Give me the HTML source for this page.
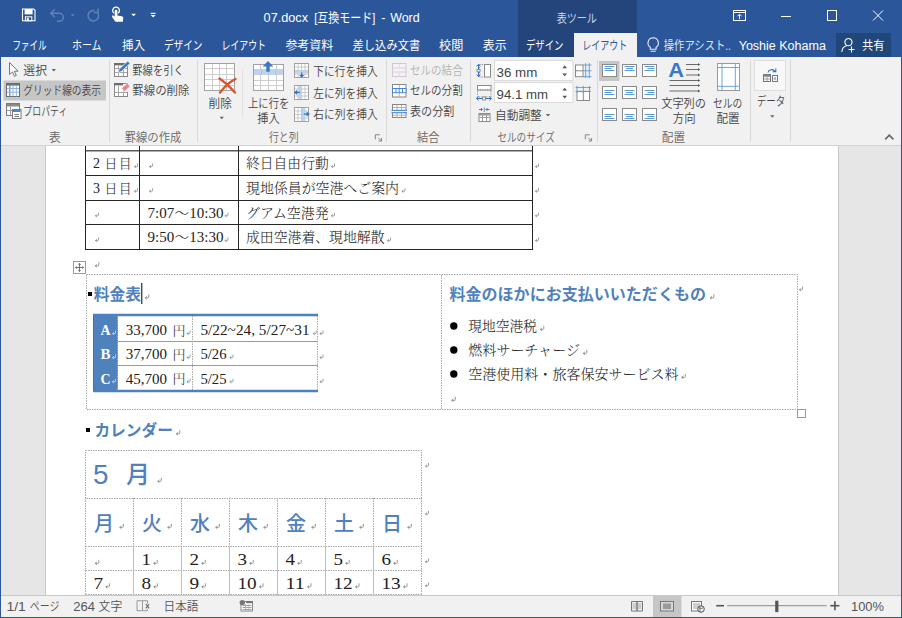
<!DOCTYPE html>
<html lang="ja"><head><meta charset="utf-8"><title>07.docx [互換モード] - Word</title>
<style>
html,body{margin:0;padding:0;}
body{width:902px;height:618px;overflow:hidden;background:#e6e6e6;font-family:"Liberation Sans","Noto Sans CJK JP",sans-serif;}
#app{position:relative;width:902px;height:618px;overflow:hidden;background:#e6e6e6;}
#titlebar{position:absolute;left:0;top:0;width:902px;height:57px;background:#2b579a;}
#ctx{position:absolute;left:518px;top:0;width:119px;height:57px;background:#23457c;}
#acttab{position:absolute;left:574px;top:33px;width:63px;height:24px;background:#f1f1f1;}
#share{position:absolute;left:836px;top:33px;width:55px;height:24px;background:#1f4779;}
#ribbon{position:absolute;left:1px;top:57px;width:900px;height:88px;background:#f1f1f1;border-bottom:1px solid #d2d2d2;}
#doc{position:absolute;left:1px;top:146px;width:900px;height:449px;background:#e6e6e6;}
#page{position:absolute;left:44px;top:0;width:792px;height:449px;background:#fff;border-left:1px solid #c8c8c8;border-right:1px solid #c8c8c8;}
#status{position:absolute;left:1px;top:595px;width:900px;height:22px;background:#f1f1f1;border-top:1px solid #c8c8c8;box-sizing:border-box;}
#frameL,#frameR{position:absolute;top:0;width:1px;height:618px;background:#2b579a;}
#frameL{left:0}#frameR{left:901px}
#frameB{position:absolute;left:0;top:617px;width:902px;height:1px;background:#2b579a;}
#ov{position:absolute;left:0;top:0;}
text{white-space:pre;}
.u{font-family:"Liberation Sans","Noto Sans CJK JP",sans-serif;font-weight:350;}
.s{font-family:"Liberation Serif","Noto Serif CJK JP","Noto Serif CJK SC",serif;font-weight:300;}
.g{font-family:"Liberation Sans","Noto Sans CJK JP",sans-serif;}
</style></head><body>
<div id="app">
<div id="titlebar"><div id="ctx"></div><div id="acttab"></div><div id="share"></div></div>
<div id="ribbon"></div>
<div id="doc"><div id="page"></div></div>
<div id="status"></div>
<div id="frameL"></div><div id="frameR"></div><div id="frameB"></div>
<svg id="ov" width="902" height="618" viewBox="0 0 902 618">
<path d="M22.5 9h11.2l1.3 1.3v10.4h-12.5z" fill="none" stroke="#ffffff" stroke-width="1.1" />
<rect x="24.6" y="9" width="8" height="5.4" fill="#ffffff" />
<rect x="25.4" y="16.8" width="6.4" height="4" fill="none" stroke="#ffffff" stroke-width="1" />
<rect x="26.8" y="17.8" width="2" height="2.6" fill="#ffffff" />
<path d="M51 13.3h8.2a4 4 0 0 1 0 8h-2.2 M54.8 9.3l-4 4l4 4" fill="none" stroke="#6482b8" stroke-width="1.5" />
<path d="M70.6 14.2h4.4l-2.2 2.3z" fill="#6482b8" />
<path d="M94.6 10.6a5.3 5.3 0 1 0 3.4 2.6 M98 8.4v4.2h-4.2" fill="none" stroke="#6482b8" stroke-width="1.5" />
<path d="M115.6 21.8c-2.2-2.6-3.2-4.2-3.8-5.8c.9-.9 2.2-.4 2.9.7V11.2a1.35 1.35 0 0 1 2.7 0v4.2l4.3.8c1.1.2 1.8 1.1 1.6 2.2l-.5 3.4z" fill="#ffffff" />
<path d="M113.9 13.2a3.4 3.4 0 1 1 4.3 0" fill="none" stroke="#ffffff" stroke-width="1.3" />
<path d="M131.2 13.8h4.8l-2.4 2.5z" fill="#ffffff" />
<rect x="150.6" y="12.8" width="5" height="1.1" fill="#ffffff" />
<path d="M150.6 15h5l-2.5 2.5z" fill="#ffffff" />
<text class="u" y="22.2" font-size="13" fill="#ffffff" style="font-weight:400"><tspan x="263.6" textLength="47.9" lengthAdjust="spacingAndGlyphs">07.docx </tspan><tspan x="314.2" textLength="64.3" lengthAdjust="spacingAndGlyphs">[互換モード] </tspan><tspan x="381.2" textLength="7.8" lengthAdjust="spacingAndGlyphs">- </tspan><tspan x="390.2" textLength="29.5" lengthAdjust="spacingAndGlyphs">Word</tspan></text>
<text class="u" x="556.8" y="23.1" font-size="12" fill="#c9d5ea" textLength="40.1" lengthAdjust="spacingAndGlyphs" style="font-weight:400">表ツール</text>
<rect x="733.5" y="10.5" width="12" height="10" fill="none" stroke="#ffffff" stroke-width="1" />
<line x1="733.5" y1="12.5" x2="745.5" y2="12.5" stroke="#ffffff" stroke-width="1" />
<path d="M739.5 19v-4.5 M737.5 16.2l2-2l2 2" fill="none" stroke="#ffffff" stroke-width="1" />
<line x1="781" y1="16.5" x2="791" y2="16.5" stroke="#ffffff" stroke-width="1" />
<rect x="827.5" y="10.5" width="9" height="10" fill="none" stroke="#ffffff" stroke-width="1" />
<path d="M873 10.5l10 10 M883 10.5l-10 10" fill="none" stroke="#ffffff" stroke-width="1" />
<text class="u" x="12.5" y="49.5" font-size="12" fill="#ffffff" textLength="33.9" lengthAdjust="spacingAndGlyphs" style="font-weight:400">ファイル</text>
<text class="u" x="72.0" y="49.5" font-size="12" fill="#ffffff" textLength="29.5" lengthAdjust="spacingAndGlyphs" style="font-weight:400">ホーム</text>
<text class="u" x="122.0" y="49.5" font-size="12" fill="#ffffff" textLength="23.0" lengthAdjust="spacingAndGlyphs" style="font-weight:400">挿入</text>
<text class="u" x="164.0" y="49.5" font-size="12" fill="#ffffff" textLength="38.5" lengthAdjust="spacingAndGlyphs" style="font-weight:400">デザイン</text>
<text class="u" x="221.5" y="49.5" font-size="12" fill="#ffffff" textLength="44.5" lengthAdjust="spacingAndGlyphs" style="font-weight:400">レイアウト</text>
<text class="u" x="285.4" y="49.5" font-size="12" fill="#ffffff" textLength="47.9" lengthAdjust="spacingAndGlyphs" style="font-weight:400">参考資料</text>
<text class="u" x="352.6" y="49.5" font-size="12" fill="#ffffff" textLength="67.6" lengthAdjust="spacingAndGlyphs" style="font-weight:400">差し込み文書</text>
<text class="u" x="439.0" y="49.5" font-size="12" fill="#ffffff" textLength="24.3" lengthAdjust="spacingAndGlyphs" style="font-weight:400">校閲</text>
<text class="u" x="482.8" y="49.5" font-size="12" fill="#ffffff" textLength="23.8" lengthAdjust="spacingAndGlyphs" style="font-weight:400">表示</text>
<text class="u" x="526.0" y="49.5" font-size="12" fill="#ffffff" textLength="37.5" lengthAdjust="spacingAndGlyphs" style="font-weight:400">デザイン</text>
<text class="u" x="582.3" y="49.5" font-size="12" fill="#2b579a" textLength="45.1" lengthAdjust="spacingAndGlyphs" style="font-weight:400">レイアウト</text>
<path d="M653.2 37.8a5.2 5.2 0 0 0 -2.9 9.5v2h5.8v-2a5.2 5.2 0 0 0 -2.9 -9.5z M650.6 51.2h5.2" fill="none" stroke="#e8eefa" stroke-width="1.1" />
<text class="u" x="663.8" y="49.5" font-size="12" fill="#dfe7f5" textLength="67.2" lengthAdjust="spacingAndGlyphs" style="font-weight:400">操作アシスト..</text>
<text class="u" x="738.7" y="49.7" font-size="12.5" fill="#ffffff" textLength="87.2" lengthAdjust="spacingAndGlyphs" style="font-weight:400">Yoshie Kohama</text>
<path d="M848.5 38.5a3.6 3.6 0 1 1 -0.1 0z M841.8 52c.3-4 2.6-6 5-6.3" fill="none" stroke="#ffffff" stroke-width="1.1" />
<path d="M851.5 46.5v6 M848.5 49.5h6" fill="none" stroke="#ffffff" stroke-width="1.1" />
<text class="u" x="862.0" y="49.5" font-size="12" fill="#ffffff" textLength="22.5" lengthAdjust="spacingAndGlyphs" style="font-weight:400">共有</text>
<line x1="109.5" y1="60" x2="109.5" y2="142" stroke="#d8d8d8" stroke-width="1" />
<line x1="197.5" y1="60" x2="197.5" y2="142" stroke="#d8d8d8" stroke-width="1" />
<line x1="386.5" y1="60" x2="386.5" y2="142" stroke="#d8d8d8" stroke-width="1" />
<line x1="470.5" y1="60" x2="470.5" y2="142" stroke="#d8d8d8" stroke-width="1" />
<line x1="597.5" y1="60" x2="597.5" y2="142" stroke="#d8d8d8" stroke-width="1" />
<line x1="750.5" y1="60" x2="750.5" y2="142" stroke="#d8d8d8" stroke-width="1" />
<line x1="790.5" y1="60" x2="790.5" y2="142" stroke="#d8d8d8" stroke-width="1" />
<line x1="242.5" y1="69" x2="242.5" y2="117" stroke="#e2e2e2" stroke-width="1" />
<text class="u" x="48.7" y="141.6" font-size="12" fill="#666666" textLength="12.0" lengthAdjust="spacingAndGlyphs">表</text>
<text class="u" x="124.7" y="141.6" font-size="12" fill="#666666" textLength="56.6" lengthAdjust="spacingAndGlyphs">罫線の作成</text>
<text class="u" x="268.9" y="141.6" font-size="12" fill="#666666" textLength="29.7" lengthAdjust="spacingAndGlyphs">行と列</text>
<text class="u" x="417.0" y="141.6" font-size="12" fill="#666666" textLength="22.5" lengthAdjust="spacingAndGlyphs">結合</text>
<text class="u" x="497.4" y="141.6" font-size="12" fill="#666666" textLength="57.4" lengthAdjust="spacingAndGlyphs">セルのサイズ</text>
<text class="u" x="661.8" y="141.6" font-size="12" fill="#666666" textLength="23.2" lengthAdjust="spacingAndGlyphs">配置</text>
<path d="M375.3 139.3v-4.5h4.5 M378.3 137.8l3 3 M381.6 138.0v3h-3" fill="none" stroke="#777" stroke-width="0.9" />
<path d="M585.3 139.3v-4.5h4.5 M588.3 137.8l3 3 M591.5999999999999 138.0v3h-3" fill="none" stroke="#777" stroke-width="0.9" />
<path d="M885.2 139.3l4.1-4.1l4.1 4.1" fill="none" stroke="#666" stroke-width="1.7" />
<path d="M9.5 62.5v12l3-2.6l2 4.4l1.8-.8l-2-4.3h3.8z" fill="#fff" stroke="#666" stroke-width="0.9" />
<text class="u" x="23.3" y="74.6" font-size="12" fill="#444444" textLength="23.7" lengthAdjust="spacingAndGlyphs">選択</text>
<path d="M51.6 69h4.4l-2.2 2.4z" fill="#666" />
<rect x="3.5" y="80.5" width="102.5" height="20" fill="#c6c6c6" />
<rect x="6.5" y="83.5" width="13" height="13" fill="#fff" stroke="#6b6b6b" stroke-width="1" />
<rect x="6" y="83" width="14" height="2.6" fill="#6e6e6e" />
<line x1="9.8" y1="85.6" x2="9.8" y2="96.5" stroke="#4a86d0" stroke-width="1.2" />
<line x1="13" y1="85.6" x2="13" y2="96.5" stroke="#8db2e3" stroke-width="1" />
<line x1="16.3" y1="85.6" x2="16.3" y2="96.5" stroke="#8db2e3" stroke-width="1" />
<line x1="7" y1="88.5" x2="19" y2="88.5" stroke="#8db2e3" stroke-width="1" />
<line x1="7" y1="92.2" x2="19" y2="92.2" stroke="#8db2e3" stroke-width="1" />
<text class="u" x="23.3" y="94.7" font-size="12" fill="#444444" textLength="77.7" lengthAdjust="spacingAndGlyphs">グリッド線の表示</text>
<rect x="6.5" y="103.5" width="13" height="12" fill="#fff" stroke="#7a7a7a" stroke-width="1" />
<rect x="7" y="104" width="12" height="2.5" fill="#8a8a8a" />
<line x1="10.5" y1="106.5" x2="10.5" y2="115.5" stroke="#9a9a9a" stroke-width="1" />
<line x1="7" y1="110.5" x2="12" y2="110.5" stroke="#9a9a9a" stroke-width="1" />
<rect x="12.5" y="109.5" width="8.5" height="9" fill="#fff" stroke="#7a7a7a" stroke-width="1" />
<rect x="13" y="110" width="7.5" height="2" fill="#4a86d0" />
<line x1="14.5" y1="114.5" x2="19" y2="114.5" stroke="#777" stroke-width="1" />
<line x1="14.5" y1="116.5" x2="19" y2="116.5" stroke="#777" stroke-width="1" />
<text class="u" x="23.3" y="115.8" font-size="12" fill="#444444" textLength="44.1" lengthAdjust="spacingAndGlyphs">プロパティ</text>
<rect x="114.5" y="63.5" width="13" height="13" fill="#fff" stroke="#888" stroke-width="1" />
<rect x="114" y="63" width="10.5" height="2.4" fill="#6e6e6e" />
<line x1="118.5" y1="66" x2="118.5" y2="76" stroke="#a5a5a5" stroke-width="1" />
<line x1="123.5" y1="66" x2="123.5" y2="76" stroke="#a5a5a5" stroke-width="1" />
<line x1="115" y1="68.5" x2="127" y2="68.5" stroke="#a5a5a5" stroke-width="1" />
<line x1="115" y1="72.5" x2="127" y2="72.5" stroke="#a5a5a5" stroke-width="1" />
<path d="M118.3 72.4l.9-3.3l8.6-8l2.2 2.3l-8.6 8z" fill="#3b78c7" stroke="#f1f1f1" stroke-width="0.7" />
<text class="u" x="132.2" y="74.6" font-size="12" fill="#444444" textLength="51.8" lengthAdjust="spacingAndGlyphs">罫線を引く</text>
<rect x="114.5" y="83.5" width="13" height="13" fill="#fff" stroke="#888" stroke-width="1" />
<rect x="114" y="83" width="9" height="2.4" fill="#6e6e6e" />
<line x1="118.5" y1="86" x2="118.5" y2="96" stroke="#a5a5a5" stroke-width="1" />
<line x1="123.5" y1="86" x2="123.5" y2="96" stroke="#a5a5a5" stroke-width="1" />
<line x1="115" y1="92.5" x2="127" y2="92.5" stroke="#a5a5a5" stroke-width="1" />
<rect x="123.5" y="87.5" width="5.5" height="4.5" fill="#fafafa" />
<path d="M121.6 88.3l5.6-5l2.9 3.2l-5.6 5z" fill="#e98592" stroke="#f1f1f1" stroke-width="0.7" stroke-linejoin="round"/>
<text class="u" x="132.2" y="94.7" font-size="12" fill="#444444" textLength="57.4" lengthAdjust="spacingAndGlyphs">罫線の削除</text>
<rect x="204.5" y="63.5" width="30" height="27" fill="#fff" stroke="#a2a2a2" stroke-width="1" />
<line x1="212.5" y1="64" x2="212.5" y2="90" stroke="#cdcdcd" stroke-width="1" />
<line x1="219.5" y1="64" x2="219.5" y2="90" stroke="#cdcdcd" stroke-width="1" />
<line x1="226.5" y1="64" x2="226.5" y2="90" stroke="#cdcdcd" stroke-width="1" />
<line x1="205" y1="68.5" x2="234" y2="68.5" stroke="#cdcdcd" stroke-width="1" />
<line x1="205" y1="74.5" x2="234" y2="74.5" stroke="#cdcdcd" stroke-width="1" />
<line x1="205" y1="79.5" x2="234" y2="79.5" stroke="#cdcdcd" stroke-width="1" />
<line x1="205" y1="85.5" x2="234" y2="85.5" stroke="#cdcdcd" stroke-width="1" />
<path d="M219.5 78.5c5 3.5 10 8 15.5 14 M235.5 79c-6 3-11 7.5-15.5 13.5" fill="none" stroke="#d9532c" stroke-width="2.4" stroke-linecap="round"/>
<text class="u" x="208.5" y="107.5" font-size="12" fill="#444444" textLength="23.3" lengthAdjust="spacingAndGlyphs">削除</text>
<path d="M219.6 116.8h4.4l-2.2 2.4z" fill="#666" />
<rect x="253.5" y="64.5" width="30" height="26" fill="#fff" stroke="#a2a2a2" stroke-width="1" />
<line x1="260.5" y1="65" x2="260.5" y2="90" stroke="#cdcdcd" stroke-width="1" />
<line x1="268.5" y1="65" x2="268.5" y2="90" stroke="#cdcdcd" stroke-width="1" />
<line x1="276.5" y1="65" x2="276.5" y2="90" stroke="#cdcdcd" stroke-width="1" />
<line x1="254" y1="69.5" x2="283" y2="69.5" stroke="#cdcdcd" stroke-width="1" />
<line x1="254" y1="74.5" x2="283" y2="74.5" stroke="#cdcdcd" stroke-width="1" />
<line x1="254" y1="80.5" x2="283" y2="80.5" stroke="#cdcdcd" stroke-width="1" />
<line x1="254" y1="85.5" x2="283" y2="85.5" stroke="#cdcdcd" stroke-width="1" />
<rect x="254" y="69.5" width="29" height="5" fill="#bdd3ee" />
<line x1="261.5" y1="69.5" x2="261.5" y2="74.5" stroke="#a9c3e6" stroke-width="1" />
<line x1="268.5" y1="69.5" x2="268.5" y2="74.5" stroke="#a9c3e6" stroke-width="1" />
<line x1="275.5" y1="69.5" x2="275.5" y2="74.5" stroke="#a9c3e6" stroke-width="1" />
<path d="M268 61l5.4 5.6h-3.7v5.2h-3.4v-5.2h-3.7z" fill="#3b78c7" />
<text class="u" x="248.0" y="107.5" font-size="12" fill="#444444" textLength="41.4" lengthAdjust="spacingAndGlyphs">上に行を</text>
<text class="u" x="257.3" y="122.5" font-size="12" fill="#444444" textLength="22.4" lengthAdjust="spacingAndGlyphs">挿入</text>
<rect x="294.5" y="63.5" width="14" height="14" fill="#fff" stroke="#a2a2a2" stroke-width="1" />
<line x1="298.0" y1="64" x2="298.0" y2="77" stroke="#b4b4b4" stroke-width="0.7" />
<line x1="295" y1="67.0" x2="308" y2="67.0" stroke="#b4b4b4" stroke-width="0.7" />
<line x1="301.5" y1="64" x2="301.5" y2="77" stroke="#b4b4b4" stroke-width="0.7" />
<line x1="295" y1="70.5" x2="308" y2="70.5" stroke="#b4b4b4" stroke-width="0.7" />
<line x1="305.0" y1="64" x2="305.0" y2="77" stroke="#b4b4b4" stroke-width="0.7" />
<line x1="295" y1="74.0" x2="308" y2="74.0" stroke="#b4b4b4" stroke-width="0.7" />
<rect x="295" y="70.5" width="13" height="3" fill="#bdd3ee" />
<path d="M301.7 72.5v3" fill="none" stroke="#3572c0" stroke-width="1.3" />
<path d="M299 74.8l2.7 3.2l2.7-3.2z" fill="#3572c0" />
<rect x="294.5" y="85.5" width="14" height="14" fill="#fff" stroke="#a2a2a2" stroke-width="1" />
<line x1="298.0" y1="86" x2="298.0" y2="99" stroke="#b4b4b4" stroke-width="0.7" />
<line x1="295" y1="89.0" x2="308" y2="89.0" stroke="#b4b4b4" stroke-width="0.7" />
<line x1="301.5" y1="86" x2="301.5" y2="99" stroke="#b4b4b4" stroke-width="0.7" />
<line x1="295" y1="92.5" x2="308" y2="92.5" stroke="#b4b4b4" stroke-width="0.7" />
<line x1="305.0" y1="86" x2="305.0" y2="99" stroke="#b4b4b4" stroke-width="0.7" />
<line x1="295" y1="96.0" x2="308" y2="96.0" stroke="#b4b4b4" stroke-width="0.7" />
<rect x="298.5" y="86" width="3" height="13" fill="#bdd3ee" />
<path d="M300 92.4h-3" fill="none" stroke="#3572c0" stroke-width="1.3" />
<path d="M297.2 89.7l-3.3 2.7l3.3 2.7z" fill="#3572c0" />
<rect x="294.5" y="107.5" width="14" height="14" fill="#fff" stroke="#a2a2a2" stroke-width="1" />
<line x1="298.0" y1="108" x2="298.0" y2="121" stroke="#b4b4b4" stroke-width="0.7" />
<line x1="295" y1="111.0" x2="308" y2="111.0" stroke="#b4b4b4" stroke-width="0.7" />
<line x1="301.5" y1="108" x2="301.5" y2="121" stroke="#b4b4b4" stroke-width="0.7" />
<line x1="295" y1="114.5" x2="308" y2="114.5" stroke="#b4b4b4" stroke-width="0.7" />
<line x1="305.0" y1="108" x2="305.0" y2="121" stroke="#b4b4b4" stroke-width="0.7" />
<line x1="295" y1="118.0" x2="308" y2="118.0" stroke="#b4b4b4" stroke-width="0.7" />
<rect x="302" y="108" width="3" height="13" fill="#bdd3ee" />
<path d="M303.8 114.1h3" fill="none" stroke="#3572c0" stroke-width="1.3" />
<path d="M306.5 111.4l3.3 2.7l-3.3 2.7z" fill="#3572c0" />
<text class="u" x="313.3" y="75.6" font-size="12" fill="#444444" textLength="64.5" lengthAdjust="spacingAndGlyphs">下に行を挿入</text>
<text class="u" x="313.3" y="97.9" font-size="12" fill="#444444" textLength="64.5" lengthAdjust="spacingAndGlyphs">左に列を挿入</text>
<text class="u" x="313.3" y="119.2" font-size="12" fill="#444444" textLength="64.5" lengthAdjust="spacingAndGlyphs">右に列を挿入</text>
<rect x="392.5" y="63.5" width="13.5" height="13" fill="#f6f1f6" stroke="#cfc9cf" stroke-width="1" />
<line x1="392.5" y1="68" x2="406" y2="68" stroke="#d6d0d6" stroke-width="1" />
<line x1="392.5" y1="72" x2="406" y2="72" stroke="#d6d0d6" stroke-width="1" />
<line x1="399.2" y1="64" x2="399.2" y2="68" stroke="#e0dbe0" stroke-width="1" />
<line x1="399.2" y1="72" x2="399.2" y2="76.5" stroke="#e0dbe0" stroke-width="1" />
<text class="u" x="410.0" y="74.6" font-size="12" fill="#b3b3b3" textLength="52.7" lengthAdjust="spacingAndGlyphs">セルの結合</text>
<rect x="392.5" y="84.5" width="13.5" height="12.5" fill="#fff" stroke="#858585" stroke-width="1" />
<line x1="399.2" y1="85" x2="399.2" y2="97" stroke="#b5b5b5" stroke-width="1" />
<rect x="392.5" y="88.5" width="13.5" height="4.2" fill="#fff" stroke="#4a86d0" stroke-width="1" />
<line x1="396" y1="89" x2="396" y2="92.5" stroke="#4a86d0" stroke-width="1" />
<line x1="399.2" y1="89" x2="399.2" y2="92.5" stroke="#4a86d0" stroke-width="1" />
<line x1="402.5" y1="89" x2="402.5" y2="92.5" stroke="#4a86d0" stroke-width="1" />
<text class="u" x="410.0" y="94.7" font-size="12" fill="#444444" textLength="52.7" lengthAdjust="spacingAndGlyphs">セルの分割</text>
<rect x="392.5" y="104.5" width="13.5" height="13" fill="#fff" stroke="#858585" stroke-width="1" />
<line x1="397" y1="105" x2="397" y2="117.5" stroke="#b0b0b0" stroke-width="1" />
<line x1="401.5" y1="105" x2="401.5" y2="117.5" stroke="#b0b0b0" stroke-width="1" />
<line x1="393" y1="107.5" x2="406" y2="107.5" stroke="#b0b0b0" stroke-width="1" />
<line x1="393" y1="115.2" x2="406" y2="115.2" stroke="#b0b0b0" stroke-width="1" />
<rect x="391.5" y="110" width="15.5" height="3" fill="#f1f1f1" />
<line x1="391.5" y1="110.4" x2="407" y2="110.4" stroke="#4a86d0" stroke-width="1.1" />
<line x1="391.5" y1="112.7" x2="407" y2="112.7" stroke="#4a86d0" stroke-width="1.1" />
<text class="u" x="410.0" y="115.8" font-size="12" fill="#444444" textLength="44.3" lengthAdjust="spacingAndGlyphs">表の分割</text>
<rect x="484.5" y="64.5" width="6" height="12.5" fill="#fff" stroke="#8a8a8a" stroke-width="1" />
<rect x="479.5" y="64.5" width="5" height="12.5" fill="none" stroke="#8a8a8a" stroke-width="1" stroke-dasharray="1.2 1.2"/>
<path d="M478.5 64.5v12 M476.6 66.3l1.9-2l1.9 2 M476.6 74.7l1.9 2l1.9-2" fill="none" stroke="#2f6fc0" stroke-width="1" />
<rect x="477" y="69.3" width="3" height="2.6" fill="#fff" stroke="#777" stroke-width="0.8" />
<rect x="494.5" y="60.5" width="78.5" height="20" fill="#fff" stroke="#dadada" stroke-width="1" />
<text class="u" x="496.6" y="76.5" font-size="13.5" fill="#444444" textLength="40.7" lengthAdjust="spacingAndGlyphs">36 mm</text>
<path d="M562.3 68.3l2.4-2.7l2.4 2.7z M562.3 73.6l2.4 2.7l2.4-2.7z" fill="#555" />
<rect x="575.5" y="65" width="7.5" height="11.7" fill="#fff" stroke="#8a8a8a" stroke-width="1" />
<line x1="575.5" y1="70.8" x2="583" y2="70.8" stroke="#8a8a8a" stroke-width="1" />
<line x1="585.7" y1="63" x2="585.7" y2="78.2" stroke="#5b9bd5" stroke-width="0.9" />
<line x1="589.3" y1="63" x2="589.3" y2="78.2" stroke="#5b9bd5" stroke-width="0.9" />
<line x1="583" y1="65" x2="591.5" y2="65" stroke="#5b9bd5" stroke-width="0.9" />
<line x1="583" y1="70.8" x2="591.5" y2="70.8" stroke="#5b9bd5" stroke-width="0.9" />
<line x1="583" y1="76.7" x2="591.5" y2="76.7" stroke="#5b9bd5" stroke-width="0.9" />
<rect x="477.5" y="85.5" width="13.5" height="4.5" fill="#fff" stroke="#8a8a8a" stroke-width="1" />
<rect x="477.5" y="90" width="13.5" height="7" fill="none" stroke="#8a8a8a" stroke-width="1" stroke-dasharray="1.2 1.2"/>
<path d="M476.5 98.5h15 M478.6 96.6l-2 1.9l2 1.9 M489.4 96.6l2 1.9l-2 1.9" fill="none" stroke="#2f6fc0" stroke-width="1" />
<rect x="482.7" y="97" width="3" height="3" fill="#fff" stroke="#777" stroke-width="0.8" />
<rect x="494.5" y="82.5" width="78.5" height="20" fill="#fff" stroke="#dadada" stroke-width="1" />
<text class="u" x="496.6" y="98.5" font-size="13.5" fill="#444444" textLength="51.4" lengthAdjust="spacingAndGlyphs">94.1 mm</text>
<path d="M562.3 90.4l2.4-2.7l2.4 2.7z M562.3 95.7l2.4 2.7l2.4-2.7z" fill="#555" />
<rect x="577" y="91.5" width="12.5" height="9" fill="#fff" stroke="#8a8a8a" stroke-width="1" />
<line x1="583.3" y1="91.5" x2="583.3" y2="100.5" stroke="#8a8a8a" stroke-width="1" />
<line x1="575.5" y1="87.5" x2="591" y2="87.5" stroke="#5b9bd5" stroke-width="0.9" />
<line x1="575.5" y1="91.4" x2="591" y2="91.4" stroke="#5b9bd5" stroke-width="0.9" />
<line x1="577" y1="85.8" x2="577" y2="93" stroke="#5b9bd5" stroke-width="0.9" />
<line x1="583.3" y1="85.8" x2="583.3" y2="93" stroke="#5b9bd5" stroke-width="0.9" />
<line x1="589.5" y1="85.8" x2="589.5" y2="93" stroke="#5b9bd5" stroke-width="0.9" />
<rect x="479.0" y="113.5" width="11" height="8" fill="#fff" stroke="#8a8a8a" stroke-width="1" />
<line x1="482.5" y1="114" x2="482.5" y2="121" stroke="#9a9a9a" stroke-width="1" />
<line x1="486.5" y1="114" x2="486.5" y2="121" stroke="#9a9a9a" stroke-width="1" />
<line x1="479.5" y1="117.5" x2="489.5" y2="117.5" stroke="#9a9a9a" stroke-width="1" />
<rect x="479" y="113.5" width="10.5" height="2" fill="#9a9a9a" />
<path d="M479 109.5h3 M481 108l1.5 1.5l-1.5 1.5 M489.5 109.5h-3 M487.5 108l-1.5 1.5l1.5 1.5" fill="none" stroke="#2f6fc0" stroke-width="0.9" />
<line x1="484.3" y1="107.5" x2="484.3" y2="112" stroke="#8a8a8a" stroke-width="1" />
<text class="u" x="495.0" y="119.5" font-size="12" fill="#444444" textLength="46.8" lengthAdjust="spacingAndGlyphs">自動調整</text>
<path d="M545.8 114h4.4l-2.2 2.4z" fill="#666" />
<rect x="599" y="61" width="20.5" height="20" fill="#c6c6c6" />
<rect x="602.5" y="64.5" width="14" height="12" fill="#fff" stroke="#8a8a8a" stroke-width="1" />
<line x1="604.5" y1="66.5" x2="614.5" y2="66.5" stroke="#5b9bd5" stroke-width="1" />
<line x1="604.5" y1="68.5" x2="611.5" y2="68.5" stroke="#5b9bd5" stroke-width="1" />
<line x1="604.5" y1="70.5" x2="614.5" y2="70.5" stroke="#5b9bd5" stroke-width="1" />
<rect x="622.5" y="64.5" width="14" height="12" fill="#fff" stroke="#8a8a8a" stroke-width="1" />
<line x1="624.5" y1="66.5" x2="634.5" y2="66.5" stroke="#5b9bd5" stroke-width="1" />
<line x1="626.0" y1="68.5" x2="633.0" y2="68.5" stroke="#5b9bd5" stroke-width="1" />
<line x1="624.5" y1="70.5" x2="634.5" y2="70.5" stroke="#5b9bd5" stroke-width="1" />
<rect x="642.5" y="64.5" width="14" height="12" fill="#fff" stroke="#8a8a8a" stroke-width="1" />
<line x1="644.5" y1="66.5" x2="654.5" y2="66.5" stroke="#5b9bd5" stroke-width="1" />
<line x1="647.5" y1="68.5" x2="654.5" y2="68.5" stroke="#5b9bd5" stroke-width="1" />
<line x1="644.5" y1="70.5" x2="654.5" y2="70.5" stroke="#5b9bd5" stroke-width="1" />
<rect x="602.5" y="86.5" width="14" height="12" fill="#fff" stroke="#8a8a8a" stroke-width="1" />
<line x1="604.5" y1="90.5" x2="614.5" y2="90.5" stroke="#5b9bd5" stroke-width="1" />
<line x1="604.5" y1="92.5" x2="611.5" y2="92.5" stroke="#5b9bd5" stroke-width="1" />
<line x1="604.5" y1="94.5" x2="614.5" y2="94.5" stroke="#5b9bd5" stroke-width="1" />
<rect x="622.5" y="86.5" width="14" height="12" fill="#fff" stroke="#8a8a8a" stroke-width="1" />
<line x1="624.5" y1="90.5" x2="634.5" y2="90.5" stroke="#5b9bd5" stroke-width="1" />
<line x1="626.0" y1="92.5" x2="633.0" y2="92.5" stroke="#5b9bd5" stroke-width="1" />
<line x1="624.5" y1="94.5" x2="634.5" y2="94.5" stroke="#5b9bd5" stroke-width="1" />
<rect x="642.5" y="86.5" width="14" height="12" fill="#fff" stroke="#8a8a8a" stroke-width="1" />
<line x1="644.5" y1="90.5" x2="654.5" y2="90.5" stroke="#5b9bd5" stroke-width="1" />
<line x1="647.5" y1="92.5" x2="654.5" y2="92.5" stroke="#5b9bd5" stroke-width="1" />
<line x1="644.5" y1="94.5" x2="654.5" y2="94.5" stroke="#5b9bd5" stroke-width="1" />
<rect x="602.5" y="108.5" width="14" height="12" fill="#fff" stroke="#8a8a8a" stroke-width="1" />
<line x1="604.5" y1="114.5" x2="614.5" y2="114.5" stroke="#5b9bd5" stroke-width="1" />
<line x1="604.5" y1="116.5" x2="611.5" y2="116.5" stroke="#5b9bd5" stroke-width="1" />
<line x1="604.5" y1="118.5" x2="614.5" y2="118.5" stroke="#5b9bd5" stroke-width="1" />
<rect x="622.5" y="108.5" width="14" height="12" fill="#fff" stroke="#8a8a8a" stroke-width="1" />
<line x1="624.5" y1="114.5" x2="634.5" y2="114.5" stroke="#5b9bd5" stroke-width="1" />
<line x1="626.0" y1="116.5" x2="633.0" y2="116.5" stroke="#5b9bd5" stroke-width="1" />
<line x1="624.5" y1="118.5" x2="634.5" y2="118.5" stroke="#5b9bd5" stroke-width="1" />
<rect x="642.5" y="108.5" width="14" height="12" fill="#fff" stroke="#8a8a8a" stroke-width="1" />
<line x1="644.5" y1="114.5" x2="654.5" y2="114.5" stroke="#5b9bd5" stroke-width="1" />
<line x1="647.5" y1="116.5" x2="654.5" y2="116.5" stroke="#5b9bd5" stroke-width="1" />
<line x1="644.5" y1="118.5" x2="654.5" y2="118.5" stroke="#5b9bd5" stroke-width="1" />
<text class="u" x="668.3" y="76.5" font-size="20" fill="#3b78c7" textLength="15.7" lengthAdjust="spacingAndGlyphs" style="font-weight:bold">A</text>
<line x1="686" y1="64.5" x2="699.5" y2="64.5" stroke="#6a6a6a" stroke-width="1" />
<path d="M698 62.9l2 1.6l-2 1.6z" fill="#555" />
<line x1="686" y1="69.5" x2="699.5" y2="69.5" stroke="#6a6a6a" stroke-width="1" />
<path d="M698 67.9l2 1.6l-2 1.6z" fill="#555" />
<line x1="686" y1="75" x2="699.5" y2="75" stroke="#6a6a6a" stroke-width="1" />
<path d="M698 73.4l2 1.6l-2 1.6z" fill="#555" />
<line x1="669.5" y1="80.5" x2="699.5" y2="80.5" stroke="#6a6a6a" stroke-width="1" />
<path d="M698 78.9l2 1.6l-2 1.6z" fill="#555" />
<line x1="669.5" y1="85.5" x2="699.5" y2="85.5" stroke="#6a6a6a" stroke-width="1" />
<path d="M698 83.9l2 1.6l-2 1.6z" fill="#555" />
<line x1="669.5" y1="91" x2="699.5" y2="91" stroke="#6a6a6a" stroke-width="1" />
<path d="M698 89.4l2 1.6l-2 1.6z" fill="#555" />
<text class="u" x="661.2" y="107.5" font-size="12" fill="#444444" textLength="44.8" lengthAdjust="spacingAndGlyphs">文字列の</text>
<text class="u" x="672.7" y="122.5" font-size="12" fill="#444444" textLength="22.9" lengthAdjust="spacingAndGlyphs">方向</text>
<rect x="717.5" y="63.5" width="22" height="27" fill="#fff" stroke="#9a9a9a" stroke-width="1" />
<line x1="722" y1="64" x2="722" y2="90.5" stroke="#5b9bd5" stroke-width="0.9" />
<line x1="735.3" y1="64" x2="735.3" y2="90.5" stroke="#5b9bd5" stroke-width="0.9" />
<line x1="718" y1="67.5" x2="739.5" y2="67.5" stroke="#5b9bd5" stroke-width="0.9" />
<line x1="718" y1="86.3" x2="739.5" y2="86.3" stroke="#5b9bd5" stroke-width="0.9" />
<text class="u" x="713.0" y="107.5" font-size="12" fill="#444444" textLength="29.4" lengthAdjust="spacingAndGlyphs">セルの</text>
<text class="u" x="716.4" y="122.5" font-size="12" fill="#444444" textLength="23.1" lengthAdjust="spacingAndGlyphs">配置</text>
<rect x="754.5" y="60.5" width="31" height="30" fill="#f8f8f8" stroke="#dedede" stroke-width="1" />
<rect x="763.5" y="74.5" width="7" height="7" fill="#fff" stroke="#777" stroke-width="1" />
<rect x="764" y="75" width="6" height="1.8" fill="#888" />
<line x1="764" y1="79" x2="770" y2="79" stroke="#888" stroke-width="0.8" />
<line x1="767" y1="77" x2="767" y2="81.5" stroke="#888" stroke-width="0.8" />
<rect x="772.5" y="75.5" width="5" height="6" fill="#fff" stroke="#777" stroke-width="1" />
<rect x="773.8" y="77" width="2.4" height="3.2" fill="#9cbce6" />
<path d="M768 72.5c.5-3 5-4.2 7-1 M775.8 68.6v3.2h-3.2" fill="none" stroke="#2f6fc0" stroke-width="1.1" />
<text class="u" x="756.7" y="105.6" font-size="12" fill="#444444" textLength="28.6" lengthAdjust="spacingAndGlyphs">データ</text>
<path d="M770.1 115.3h4.4l-2.2 2.4z" fill="#666" />
<clipPath id="docclip"><rect x="46" y="146" width="792" height="449"/></clipPath>
<g id="docg" clip-path="url(#docclip)">
<line x1="85" y1="150.8" x2="533" y2="150.8" stroke="#5a5a5a" stroke-width="1.4" />
<line x1="85" y1="175.5" x2="533" y2="175.5" stroke="#262626" stroke-width="1" />
<line x1="85" y1="200.5" x2="533" y2="200.5" stroke="#262626" stroke-width="1" />
<line x1="85" y1="224.5" x2="533" y2="224.5" stroke="#262626" stroke-width="1" />
<line x1="85" y1="249.5" x2="533" y2="249.5" stroke="#262626" stroke-width="1" />
<line x1="85.5" y1="146" x2="85.5" y2="250" stroke="#262626" stroke-width="1" />
<line x1="139.5" y1="146" x2="139.5" y2="250" stroke="#262626" stroke-width="1" />
<line x1="238.5" y1="146" x2="238.5" y2="250" stroke="#262626" stroke-width="1" />
<line x1="532.5" y1="146" x2="532.5" y2="250" stroke="#262626" stroke-width="1" />
<text class="s" x="93.0" y="168.3" font-size="14" fill="#222" textLength="7.0" lengthAdjust="spacingAndGlyphs">2</text>
<text class="s" y="167.9" font-size="12.8" fill="#222"><tspan x="104.4">日</tspan><tspan x="118.7">目</tspan></text>
<text class="s" x="93.0" y="193.0" font-size="14" fill="#222" textLength="7.0" lengthAdjust="spacingAndGlyphs">3</text>
<text class="s" y="192.6" font-size="12.8" fill="#222"><tspan x="104.4">日</tspan><tspan x="118.7">目</tspan></text>
<text class="s" x="147.5" y="217.5" font-size="14" fill="#222" textLength="76.0" lengthAdjust="spacingAndGlyphs">7:07～10:30</text>
<text class="s" x="147.5" y="242.3" font-size="14" fill="#222" textLength="76.0" lengthAdjust="spacingAndGlyphs">9:50～13:30</text>
<text class="s" x="246.0" y="168.3" font-size="14" fill="#222" textLength="82.7" lengthAdjust="spacingAndGlyphs">終日自由行動</text>
<text class="s" x="246.0" y="193.0" font-size="14" fill="#222" textLength="153.0" lengthAdjust="spacingAndGlyphs">現地係員が空港へご案内</text>
<text class="s" x="246.0" y="217.5" font-size="14" fill="#222" textLength="82.7" lengthAdjust="spacingAndGlyphs">グアム空港発</text>
<text class="s" x="246.0" y="242.3" font-size="14" fill="#222" textLength="138.5" lengthAdjust="spacingAndGlyphs">成田空港着、現地解散</text>
<path d="M137.5 163.9v2.03q0 0.68 -0.68 0.68h-2.10 M135.6 165.5l-1.20 1.05l1.20 1.05" fill="none" stroke="#8a8a8a" stroke-width="0.8" stroke-linecap="round" stroke-linejoin="round"/>
<path d="M152.5 163.9v2.03q0 0.68 -0.68 0.68h-2.10 M150.6 165.5l-1.20 1.05l1.20 1.05" fill="none" stroke="#8a8a8a" stroke-width="0.8" stroke-linecap="round" stroke-linejoin="round"/>
<path d="M137.5 188.6v2.03q0 0.68 -0.68 0.68h-2.10 M135.6 190.2l-1.20 1.05l1.20 1.05" fill="none" stroke="#8a8a8a" stroke-width="0.8" stroke-linecap="round" stroke-linejoin="round"/>
<path d="M152.5 188.6v2.03q0 0.68 -0.68 0.68h-2.10 M150.6 190.2l-1.20 1.05l1.20 1.05" fill="none" stroke="#8a8a8a" stroke-width="0.8" stroke-linecap="round" stroke-linejoin="round"/>
<path d="M98.5 213.1v2.03q0 0.68 -0.68 0.68h-2.10 M96.6 214.7l-1.20 1.05l1.20 1.05" fill="none" stroke="#8a8a8a" stroke-width="0.8" stroke-linecap="round" stroke-linejoin="round"/>
<path d="M228.0 213.1v2.03q0 0.68 -0.68 0.68h-2.10 M226.1 214.7l-1.20 1.05l1.20 1.05" fill="none" stroke="#8a8a8a" stroke-width="0.8" stroke-linecap="round" stroke-linejoin="round"/>
<path d="M98.5 237.9v2.03q0 0.68 -0.68 0.68h-2.10 M96.6 239.5l-1.20 1.05l1.20 1.05" fill="none" stroke="#8a8a8a" stroke-width="0.8" stroke-linecap="round" stroke-linejoin="round"/>
<path d="M228.0 237.9v2.03q0 0.68 -0.68 0.68h-2.10 M226.1 239.5l-1.20 1.05l1.20 1.05" fill="none" stroke="#8a8a8a" stroke-width="0.8" stroke-linecap="round" stroke-linejoin="round"/>
<path d="M334.5 163.9v2.03q0 0.68 -0.68 0.68h-2.10 M332.6 165.5l-1.20 1.05l1.20 1.05" fill="none" stroke="#8a8a8a" stroke-width="0.8" stroke-linecap="round" stroke-linejoin="round"/>
<path d="M405.0 188.6v2.03q0 0.68 -0.68 0.68h-2.10 M403.1 190.2l-1.20 1.05l1.20 1.05" fill="none" stroke="#8a8a8a" stroke-width="0.8" stroke-linecap="round" stroke-linejoin="round"/>
<path d="M334.5 213.1v2.03q0 0.68 -0.68 0.68h-2.10 M332.6 214.7l-1.20 1.05l1.20 1.05" fill="none" stroke="#8a8a8a" stroke-width="0.8" stroke-linecap="round" stroke-linejoin="round"/>
<path d="M390.5 237.9v2.03q0 0.68 -0.68 0.68h-2.10 M388.6 239.5l-1.20 1.05l1.20 1.05" fill="none" stroke="#8a8a8a" stroke-width="0.8" stroke-linecap="round" stroke-linejoin="round"/>
<path d="M538.5 163.9v2.03q0 0.68 -0.68 0.68h-2.10 M536.6 165.5l-1.20 1.05l1.20 1.05" fill="none" stroke="#8a8a8a" stroke-width="0.8" stroke-linecap="round" stroke-linejoin="round"/>
<path d="M538.5 188.6v2.03q0 0.68 -0.68 0.68h-2.10 M536.6 190.2l-1.20 1.05l1.20 1.05" fill="none" stroke="#8a8a8a" stroke-width="0.8" stroke-linecap="round" stroke-linejoin="round"/>
<path d="M538.5 213.1v2.03q0 0.68 -0.68 0.68h-2.10 M536.6 214.7l-1.20 1.05l1.20 1.05" fill="none" stroke="#8a8a8a" stroke-width="0.8" stroke-linecap="round" stroke-linejoin="round"/>
<path d="M538.5 237.9v2.03q0 0.68 -0.68 0.68h-2.10 M536.6 239.5l-1.20 1.05l1.20 1.05" fill="none" stroke="#8a8a8a" stroke-width="0.8" stroke-linecap="round" stroke-linejoin="round"/>
<rect x="73.5" y="261.5" width="12" height="12" fill="#fff" stroke="#9a9a9a" stroke-width="1" />
<path d="M79.5 263.5v8 M75.5 267.5h8" fill="none" stroke="#555" stroke-width="0.8" />
<path d="M78.3 264.8l1.2-1.4l1.2 1.4 M78.3 270.2l1.2 1.4l1.2-1.4 M76.8 266.3l-1.4 1.2l1.4 1.2 M82.2 266.3l1.4 1.2l-1.4 1.2" fill="none" stroke="#555" stroke-width="0.7" />
<path d="M98.8 262.7v2.38q0 0.79 -0.79 0.79h-2.46 M96.6 264.6l-1.41 1.23l1.41 1.23" fill="none" stroke="#808080" stroke-width="0.8" stroke-linecap="round" stroke-linejoin="round"/>
<rect x="86.5" y="274.5" width="711" height="135" fill="none" stroke="#a8a8a8" stroke-width="1" stroke-dasharray="1.5 1"/>
<line x1="441.5" y1="275" x2="441.5" y2="409" stroke="#a8a8a8" stroke-width="1" stroke-dasharray="1.5 1"/>
<rect x="797.5" y="409.5" width="8" height="8" fill="#fff" stroke="#9a9a9a" stroke-width="1" />
<path d="M802.5 287.1v2.03q0 0.68 -0.68 0.68h-2.10 M800.6 288.7l-1.20 1.05l1.20 1.05" fill="none" stroke="#8a8a8a" stroke-width="0.8" stroke-linecap="round" stroke-linejoin="round"/>
<rect x="88" y="292" width="4" height="4" fill="#000" />
<text class="g" x="93.7" y="300.1" font-size="16" fill="#4f81bd" textLength="47.3" lengthAdjust="spacingAndGlyphs" style="font-weight:bold">料金表</text>
<line x1="141.8" y1="283" x2="141.8" y2="304" stroke="#000" stroke-width="1" />
<path d="M148.8 294.7v2.38q0 0.79 -0.79 0.79h-2.46 M146.6 296.6l-1.41 1.23l1.41 1.23" fill="none" stroke="#808080" stroke-width="0.8" stroke-linecap="round" stroke-linejoin="round"/>
<rect x="93" y="316" width="25" height="74" fill="#4f81bd" />
<line x1="93" y1="315" x2="318" y2="315" stroke="#4f81bd" stroke-width="2.4" />
<line x1="93" y1="391" x2="318" y2="391" stroke="#4f81bd" stroke-width="2.4" />
<line x1="118" y1="341.5" x2="318" y2="341.5" stroke="#7ba0d4" stroke-width="1" />
<line x1="118" y1="365.5" x2="318" y2="365.5" stroke="#7ba0d4" stroke-width="1" />
<line x1="192.5" y1="316" x2="192.5" y2="390" stroke="#a8a8a8" stroke-width="1" stroke-dasharray="1.5 1"/>
<line x1="317.5" y1="316" x2="317.5" y2="390" stroke="#a8a8a8" stroke-width="1" stroke-dasharray="1.5 1"/>
<line x1="93.5" y1="316" x2="93.5" y2="390" stroke="#3a66a0" stroke-width="1" stroke-dasharray="1.5 1"/>
<line x1="117.5" y1="316" x2="117.5" y2="390" stroke="#8fb0dc" stroke-width="1" stroke-dasharray="1.5 1"/>
<text class="s" x="100.5" y="335.3" font-size="14" fill="#fff" textLength="10.0" lengthAdjust="spacingAndGlyphs" style="font-weight:bold">A</text>
<path d="M115.5 330.9v2.03q0 0.68 -0.68 0.68h-2.10 M113.6 332.5l-1.20 1.05l1.20 1.05" fill="none" stroke="#c9d9ee" stroke-width="0.8" stroke-linecap="round" stroke-linejoin="round"/>
<text class="s" x="125.8" y="335.3" font-size="14" fill="#222" textLength="41.2" lengthAdjust="spacingAndGlyphs">33,700</text>
<text class="s" x="172.6" y="335.0" font-size="13" fill="#222" textLength="13.0" lengthAdjust="spacingAndGlyphs">円</text>
<path d="M190.0 330.9v2.03q0 0.68 -0.68 0.68h-2.10 M188.1 332.5l-1.20 1.05l1.20 1.05" fill="none" stroke="#8a8a8a" stroke-width="0.8" stroke-linecap="round" stroke-linejoin="round"/>
<text class="s" x="200.4" y="335.3" font-size="14" fill="#222" textLength="109.3" lengthAdjust="spacingAndGlyphs">5/22~24, 5/27~31</text>
<path d="M316.2 330.9v2.03q0 0.68 -0.68 0.68h-2.10 M314.3 332.5l-1.20 1.05l1.20 1.05" fill="none" stroke="#8a8a8a" stroke-width="0.8" stroke-linecap="round" stroke-linejoin="round"/>
<path d="M323.0 330.9v2.03q0 0.68 -0.68 0.68h-2.10 M321.1 332.5l-1.20 1.05l1.20 1.05" fill="none" stroke="#8a8a8a" stroke-width="0.8" stroke-linecap="round" stroke-linejoin="round"/>
<text class="s" x="100.5" y="359.3" font-size="14" fill="#fff" textLength="10.0" lengthAdjust="spacingAndGlyphs" style="font-weight:bold">B</text>
<path d="M115.5 354.9v2.03q0 0.68 -0.68 0.68h-2.10 M113.6 356.5l-1.20 1.05l1.20 1.05" fill="none" stroke="#c9d9ee" stroke-width="0.8" stroke-linecap="round" stroke-linejoin="round"/>
<text class="s" x="125.8" y="359.3" font-size="14" fill="#222" textLength="41.2" lengthAdjust="spacingAndGlyphs">37,700</text>
<text class="s" x="172.6" y="359.0" font-size="13" fill="#222" textLength="13.0" lengthAdjust="spacingAndGlyphs">円</text>
<path d="M190.0 354.9v2.03q0 0.68 -0.68 0.68h-2.10 M188.1 356.5l-1.20 1.05l1.20 1.05" fill="none" stroke="#8a8a8a" stroke-width="0.8" stroke-linecap="round" stroke-linejoin="round"/>
<text class="s" x="200.4" y="359.3" font-size="14" fill="#222" textLength="26.1" lengthAdjust="spacingAndGlyphs">5/26</text>
<path d="M233.0 354.9v2.03q0 0.68 -0.68 0.68h-2.10 M231.1 356.5l-1.20 1.05l1.20 1.05" fill="none" stroke="#8a8a8a" stroke-width="0.8" stroke-linecap="round" stroke-linejoin="round"/>
<path d="M323.0 354.9v2.03q0 0.68 -0.68 0.68h-2.10 M321.1 356.5l-1.20 1.05l1.20 1.05" fill="none" stroke="#8a8a8a" stroke-width="0.8" stroke-linecap="round" stroke-linejoin="round"/>
<text class="s" x="100.5" y="383.5" font-size="14" fill="#fff" textLength="10.0" lengthAdjust="spacingAndGlyphs" style="font-weight:bold">C</text>
<path d="M115.5 379.1v2.03q0 0.68 -0.68 0.68h-2.10 M113.6 380.7l-1.20 1.05l1.20 1.05" fill="none" stroke="#c9d9ee" stroke-width="0.8" stroke-linecap="round" stroke-linejoin="round"/>
<text class="s" x="125.8" y="383.5" font-size="14" fill="#222" textLength="41.2" lengthAdjust="spacingAndGlyphs">45,700</text>
<text class="s" x="172.6" y="383.2" font-size="13" fill="#222" textLength="13.0" lengthAdjust="spacingAndGlyphs">円</text>
<path d="M190.0 379.1v2.03q0 0.68 -0.68 0.68h-2.10 M188.1 380.7l-1.20 1.05l1.20 1.05" fill="none" stroke="#8a8a8a" stroke-width="0.8" stroke-linecap="round" stroke-linejoin="round"/>
<text class="s" x="200.4" y="383.5" font-size="14" fill="#222" textLength="26.1" lengthAdjust="spacingAndGlyphs">5/25</text>
<path d="M233.0 379.1v2.03q0 0.68 -0.68 0.68h-2.10 M231.1 380.7l-1.20 1.05l1.20 1.05" fill="none" stroke="#8a8a8a" stroke-width="0.8" stroke-linecap="round" stroke-linejoin="round"/>
<path d="M323.0 379.1v2.03q0 0.68 -0.68 0.68h-2.10 M321.1 380.7l-1.20 1.05l1.20 1.05" fill="none" stroke="#8a8a8a" stroke-width="0.8" stroke-linecap="round" stroke-linejoin="round"/>
<text class="g" x="449.5" y="300.2" font-size="16" fill="#4f81bd" textLength="256.5" lengthAdjust="spacingAndGlyphs" style="font-weight:bold">料金のほかにお支払いいただくもの</text>
<path d="M713.8 294.7v2.38q0 0.79 -0.79 0.79h-2.46 M711.6 296.6l-1.41 1.23l1.41 1.23" fill="none" stroke="#808080" stroke-width="0.8" stroke-linecap="round" stroke-linejoin="round"/>
<circle cx="453.8" cy="326" r="3.7" fill="#000"/>
<text class="s" x="468.3" y="331.0" font-size="14" fill="#222" textLength="68.7" lengthAdjust="spacingAndGlyphs">現地空港税</text>
<path d="M543.8 326.2v2.38q0 0.79 -0.79 0.79h-2.46 M541.6 328.1l-1.41 1.23l1.41 1.23" fill="none" stroke="#808080" stroke-width="0.8" stroke-linecap="round" stroke-linejoin="round"/>
<circle cx="453.8" cy="350" r="3.7" fill="#000"/>
<text class="s" x="468.3" y="355.0" font-size="14" fill="#222" textLength="111.7" lengthAdjust="spacingAndGlyphs">燃料サーチャージ</text>
<path d="M586.8 350.2v2.38q0 0.79 -0.79 0.79h-2.46 M584.6 352.1l-1.41 1.23l1.41 1.23" fill="none" stroke="#808080" stroke-width="0.8" stroke-linecap="round" stroke-linejoin="round"/>
<circle cx="453.8" cy="374" r="3.7" fill="#000"/>
<text class="s" x="468.3" y="379.0" font-size="14" fill="#222" textLength="210.2" lengthAdjust="spacingAndGlyphs">空港使用料・旅客保安サービス料</text>
<path d="M685.3 374.2v2.38q0 0.79 -0.79 0.79h-2.46 M683.1 376.1l-1.41 1.23l1.41 1.23" fill="none" stroke="#808080" stroke-width="0.8" stroke-linecap="round" stroke-linejoin="round"/>
<path d="M455.3 397.2v2.38q0 0.79 -0.79 0.79h-2.46 M453.1 399.1l-1.41 1.23l1.41 1.23" fill="none" stroke="#808080" stroke-width="0.8" stroke-linecap="round" stroke-linejoin="round"/>
<rect x="86" y="428" width="4" height="4" fill="#000" />
<text class="g" x="94.4" y="435.8" font-size="16" fill="#4f81bd" textLength="78.6" lengthAdjust="spacingAndGlyphs" style="font-weight:bold">カレンダー</text>
<path d="M179.8 430.7v2.38q0 0.79 -0.79 0.79h-2.46 M177.6 432.6l-1.41 1.23l1.41 1.23" fill="none" stroke="#808080" stroke-width="0.8" stroke-linecap="round" stroke-linejoin="round"/>
<rect x="85.5" y="450.5" width="336" height="48" fill="none" stroke="#a8a8a8" stroke-width="1" stroke-dasharray="1.5 1"/>
<line x1="85.5" y1="546.5" x2="421.5" y2="546.5" stroke="#a8a8a8" stroke-width="1" stroke-dasharray="1.5 1"/>
<line x1="85.5" y1="570.5" x2="421.5" y2="570.5" stroke="#a8a8a8" stroke-width="1" stroke-dasharray="1.5 1"/>
<line x1="85.5" y1="594.5" x2="421.5" y2="594.5" stroke="#a8a8a8" stroke-width="1" stroke-dasharray="1.5 1"/>
<line x1="85.5" y1="498" x2="85.5" y2="595" stroke="#a8a8a8" stroke-width="1" stroke-dasharray="1.5 1"/>
<line x1="421.5" y1="498" x2="421.5" y2="595" stroke="#a8a8a8" stroke-width="1" stroke-dasharray="1.5 1"/>
<line x1="133.5" y1="498" x2="133.5" y2="546" stroke="#a8a8a8" stroke-width="1" stroke-dasharray="1.5 1"/>
<line x1="133.5" y1="546.5" x2="133.5" y2="595" stroke="#a9c1e4" stroke-width="1" />
<line x1="181.5" y1="498" x2="181.5" y2="546" stroke="#a8a8a8" stroke-width="1" stroke-dasharray="1.5 1"/>
<line x1="181.5" y1="546.5" x2="181.5" y2="595" stroke="#a9c1e4" stroke-width="1" />
<line x1="229.5" y1="498" x2="229.5" y2="546" stroke="#a8a8a8" stroke-width="1" stroke-dasharray="1.5 1"/>
<line x1="229.5" y1="546.5" x2="229.5" y2="595" stroke="#a9c1e4" stroke-width="1" />
<line x1="277.5" y1="498" x2="277.5" y2="546" stroke="#a8a8a8" stroke-width="1" stroke-dasharray="1.5 1"/>
<line x1="277.5" y1="546.5" x2="277.5" y2="595" stroke="#a9c1e4" stroke-width="1" />
<line x1="325.5" y1="498" x2="325.5" y2="546" stroke="#a8a8a8" stroke-width="1" stroke-dasharray="1.5 1"/>
<line x1="325.5" y1="546.5" x2="325.5" y2="595" stroke="#a9c1e4" stroke-width="1" />
<line x1="373.5" y1="498" x2="373.5" y2="546" stroke="#a8a8a8" stroke-width="1" stroke-dasharray="1.5 1"/>
<line x1="373.5" y1="546.5" x2="373.5" y2="595" stroke="#a9c1e4" stroke-width="1" />
<text class="g" x="93.0" y="484.0" font-size="27" fill="#4f81bd" textLength="15.5" lengthAdjust="spacingAndGlyphs">5</text>
<text class="g" x="126.0" y="482.9" font-size="24" fill="#4f81bd" textLength="24.0" lengthAdjust="spacingAndGlyphs" style="font-weight:500">月</text>
<path d="M161.3 478.2v2.38q0 0.79 -0.79 0.79h-2.46 M159.1 480.1l-1.41 1.23l1.41 1.23" fill="none" stroke="#808080" stroke-width="0.8" stroke-linecap="round" stroke-linejoin="round"/>
<text class="g" x="94.0" y="530.5" font-size="20" fill="#4f81bd" textLength="20.0" lengthAdjust="spacingAndGlyphs" style="font-weight:500">月</text>
<path d="M123.3 524.2v2.38q0 0.79 -0.79 0.79h-2.46 M121.1 526.1l-1.41 1.23l1.41 1.23" fill="none" stroke="#808080" stroke-width="0.8" stroke-linecap="round" stroke-linejoin="round"/>
<text class="g" x="142.0" y="530.5" font-size="20" fill="#4f81bd" textLength="20.0" lengthAdjust="spacingAndGlyphs" style="font-weight:500">火</text>
<path d="M171.3 524.2v2.38q0 0.79 -0.79 0.79h-2.46 M169.1 526.1l-1.41 1.23l1.41 1.23" fill="none" stroke="#808080" stroke-width="0.8" stroke-linecap="round" stroke-linejoin="round"/>
<text class="g" x="190.0" y="530.5" font-size="20" fill="#4f81bd" textLength="20.0" lengthAdjust="spacingAndGlyphs" style="font-weight:500">水</text>
<path d="M219.3 524.2v2.38q0 0.79 -0.79 0.79h-2.46 M217.1 526.1l-1.41 1.23l1.41 1.23" fill="none" stroke="#808080" stroke-width="0.8" stroke-linecap="round" stroke-linejoin="round"/>
<text class="g" x="238.0" y="530.5" font-size="20" fill="#4f81bd" textLength="20.0" lengthAdjust="spacingAndGlyphs" style="font-weight:500">木</text>
<path d="M267.3 524.2v2.38q0 0.79 -0.79 0.79h-2.46 M265.1 526.1l-1.41 1.23l1.41 1.23" fill="none" stroke="#808080" stroke-width="0.8" stroke-linecap="round" stroke-linejoin="round"/>
<text class="g" x="286.0" y="530.5" font-size="20" fill="#4f81bd" textLength="20.0" lengthAdjust="spacingAndGlyphs" style="font-weight:500">金</text>
<path d="M315.3 524.2v2.38q0 0.79 -0.79 0.79h-2.46 M313.1 526.1l-1.41 1.23l1.41 1.23" fill="none" stroke="#808080" stroke-width="0.8" stroke-linecap="round" stroke-linejoin="round"/>
<text class="g" x="334.0" y="530.5" font-size="20" fill="#4f81bd" textLength="20.0" lengthAdjust="spacingAndGlyphs" style="font-weight:500">土</text>
<path d="M363.3 524.2v2.38q0 0.79 -0.79 0.79h-2.46 M361.1 526.1l-1.41 1.23l1.41 1.23" fill="none" stroke="#808080" stroke-width="0.8" stroke-linecap="round" stroke-linejoin="round"/>
<text class="g" x="382.0" y="530.5" font-size="20" fill="#4f81bd" textLength="20.0" lengthAdjust="spacingAndGlyphs" style="font-weight:500">日</text>
<path d="M411.3 524.2v2.38q0 0.79 -0.79 0.79h-2.46 M409.1 526.1l-1.41 1.23l1.41 1.23" fill="none" stroke="#808080" stroke-width="0.8" stroke-linecap="round" stroke-linejoin="round"/>
<path d="M98.8 560.2v2.38q0 0.79 -0.79 0.79h-2.46 M96.6 562.1l-1.41 1.23l1.41 1.23" fill="none" stroke="#808080" stroke-width="0.8" stroke-linecap="round" stroke-linejoin="round"/>
<text class="s" x="93.5" y="588.6" font-size="16" fill="#222" textLength="9.6" lengthAdjust="spacingAndGlyphs">7</text>
<path d="M109.4 583.7v2.38q0 0.79 -0.79 0.79h-2.46 M107.2 585.6l-1.41 1.23l1.41 1.23" fill="none" stroke="#808080" stroke-width="0.8" stroke-linecap="round" stroke-linejoin="round"/>
<text class="s" x="141.5" y="565.1" font-size="16" fill="#222" textLength="9.5" lengthAdjust="spacingAndGlyphs">1</text>
<path d="M157.3 560.2v2.38q0 0.79 -0.79 0.79h-2.46 M155.1 562.1l-1.41 1.23l1.41 1.23" fill="none" stroke="#808080" stroke-width="0.8" stroke-linecap="round" stroke-linejoin="round"/>
<text class="s" x="141.5" y="588.6" font-size="16" fill="#222" textLength="9.6" lengthAdjust="spacingAndGlyphs">8</text>
<path d="M157.4 583.7v2.38q0 0.79 -0.79 0.79h-2.46 M155.2 585.6l-1.41 1.23l1.41 1.23" fill="none" stroke="#808080" stroke-width="0.8" stroke-linecap="round" stroke-linejoin="round"/>
<text class="s" x="189.5" y="565.1" font-size="16" fill="#222" textLength="9.5" lengthAdjust="spacingAndGlyphs">2</text>
<path d="M205.3 560.2v2.38q0 0.79 -0.79 0.79h-2.46 M203.1 562.1l-1.41 1.23l1.41 1.23" fill="none" stroke="#808080" stroke-width="0.8" stroke-linecap="round" stroke-linejoin="round"/>
<text class="s" x="189.5" y="588.6" font-size="16" fill="#222" textLength="9.6" lengthAdjust="spacingAndGlyphs">9</text>
<path d="M205.4 583.7v2.38q0 0.79 -0.79 0.79h-2.46 M203.2 585.6l-1.41 1.23l1.41 1.23" fill="none" stroke="#808080" stroke-width="0.8" stroke-linecap="round" stroke-linejoin="round"/>
<text class="s" x="237.5" y="565.1" font-size="16" fill="#222" textLength="9.5" lengthAdjust="spacingAndGlyphs">3</text>
<path d="M253.3 560.2v2.38q0 0.79 -0.79 0.79h-2.46 M251.1 562.1l-1.41 1.23l1.41 1.23" fill="none" stroke="#808080" stroke-width="0.8" stroke-linecap="round" stroke-linejoin="round"/>
<text class="s" x="237.5" y="588.6" font-size="16" fill="#222" textLength="19.2" lengthAdjust="spacingAndGlyphs">10</text>
<path d="M263.0 583.7v2.38q0 0.79 -0.79 0.79h-2.46 M260.8 585.6l-1.41 1.23l1.41 1.23" fill="none" stroke="#808080" stroke-width="0.8" stroke-linecap="round" stroke-linejoin="round"/>
<text class="s" x="285.5" y="565.1" font-size="16" fill="#222" textLength="9.5" lengthAdjust="spacingAndGlyphs">4</text>
<path d="M301.3 560.2v2.38q0 0.79 -0.79 0.79h-2.46 M299.1 562.1l-1.41 1.23l1.41 1.23" fill="none" stroke="#808080" stroke-width="0.8" stroke-linecap="round" stroke-linejoin="round"/>
<text class="s" x="285.5" y="588.6" font-size="16" fill="#222" textLength="19.2" lengthAdjust="spacingAndGlyphs">11</text>
<path d="M311.0 583.7v2.38q0 0.79 -0.79 0.79h-2.46 M308.8 585.6l-1.41 1.23l1.41 1.23" fill="none" stroke="#808080" stroke-width="0.8" stroke-linecap="round" stroke-linejoin="round"/>
<text class="s" x="333.5" y="565.1" font-size="16" fill="#222" textLength="9.5" lengthAdjust="spacingAndGlyphs">5</text>
<path d="M349.3 560.2v2.38q0 0.79 -0.79 0.79h-2.46 M347.1 562.1l-1.41 1.23l1.41 1.23" fill="none" stroke="#808080" stroke-width="0.8" stroke-linecap="round" stroke-linejoin="round"/>
<text class="s" x="333.5" y="588.6" font-size="16" fill="#222" textLength="19.2" lengthAdjust="spacingAndGlyphs">12</text>
<path d="M359.0 583.7v2.38q0 0.79 -0.79 0.79h-2.46 M356.8 585.6l-1.41 1.23l1.41 1.23" fill="none" stroke="#808080" stroke-width="0.8" stroke-linecap="round" stroke-linejoin="round"/>
<text class="s" x="381.5" y="565.1" font-size="16" fill="#222" textLength="9.5" lengthAdjust="spacingAndGlyphs">6</text>
<path d="M397.3 560.2v2.38q0 0.79 -0.79 0.79h-2.46 M395.1 562.1l-1.41 1.23l1.41 1.23" fill="none" stroke="#808080" stroke-width="0.8" stroke-linecap="round" stroke-linejoin="round"/>
<text class="s" x="381.5" y="588.6" font-size="16" fill="#222" textLength="19.2" lengthAdjust="spacingAndGlyphs">13</text>
<path d="M407.0 583.7v2.38q0 0.79 -0.79 0.79h-2.46 M404.8 585.6l-1.41 1.23l1.41 1.23" fill="none" stroke="#808080" stroke-width="0.8" stroke-linecap="round" stroke-linejoin="round"/>
<path d="M428.5 463.4v2.03q0 0.68 -0.68 0.68h-2.10 M426.6 465.1l-1.20 1.05l1.20 1.05" fill="none" stroke="#8a8a8a" stroke-width="0.8" stroke-linecap="round" stroke-linejoin="round"/>
<path d="M428.5 511.3v2.03q0 0.68 -0.68 0.68h-2.10 M426.6 513.0l-1.20 1.05l1.20 1.05" fill="none" stroke="#8a8a8a" stroke-width="0.8" stroke-linecap="round" stroke-linejoin="round"/>
<path d="M428.5 559.0v2.03q0 0.68 -0.68 0.68h-2.10 M426.6 560.7l-1.20 1.05l1.20 1.05" fill="none" stroke="#8a8a8a" stroke-width="0.8" stroke-linecap="round" stroke-linejoin="round"/>
<path d="M428.5 583.0v2.03q0 0.68 -0.68 0.68h-2.10 M426.6 584.7l-1.20 1.05l1.20 1.05" fill="none" stroke="#8a8a8a" stroke-width="0.8" stroke-linecap="round" stroke-linejoin="round"/>
</g>
<text class="u" y="611.4" font-size="12.5" fill="#555"><tspan x="6.4" textLength="23.4" lengthAdjust="spacingAndGlyphs">1/1 </tspan><tspan x="29.8" textLength="29.6" lengthAdjust="spacingAndGlyphs">ページ</tspan></text>
<text class="u" y="611.4" font-size="12.5" fill="#555"><tspan x="73.2" textLength="25.4" lengthAdjust="spacingAndGlyphs">264 </tspan><tspan x="98.6" textLength="23.7" lengthAdjust="spacingAndGlyphs">文字</tspan></text>
<path d="M137 600.7h5.5v10h-5.5z M142.5 600.7h5v3 M142.5 610.7h5v-1.5" fill="none" stroke="#9a9a9a" stroke-width="1" />
<path d="M145.8 604l3.4 4.4 M149.2 604l-3.4 4.4" fill="none" stroke="#666" stroke-width="1.1" />
<text class="u" x="163.5" y="611.4" font-size="12.5" fill="#555" textLength="35.0" lengthAdjust="spacingAndGlyphs">日本語</text>
<rect x="241" y="601.5" width="11.5" height="9.5" fill="#fff" stroke="#8a8a8a" stroke-width="1" />
<rect x="246" y="601" width="7" height="2.2" fill="#777" />
<line x1="242.5" y1="605.5" x2="251.5" y2="605.5" stroke="#999" stroke-width="0.9" />
<line x1="242.5" y1="607.5" x2="251.5" y2="607.5" stroke="#999" stroke-width="0.9" />
<line x1="242.5" y1="609.5" x2="251.5" y2="609.5" stroke="#999" stroke-width="0.9" />
<line x1="245.5" y1="604" x2="245.5" y2="611" stroke="#aaa" stroke-width="0.8" />
<line x1="249" y1="604" x2="249" y2="611" stroke="#aaa" stroke-width="0.8" />
<circle cx="242.3" cy="602.6" r="2.7" fill="#777"/>
<path d="M631.5 601.5h5.5v9.5h-5.5z M637 601.5h5.5v9.5h-5.5z" fill="#f1f1f1" stroke="#777" stroke-width="1" />
<line x1="632.5" y1="604" x2="636" y2="604" stroke="#999" stroke-width="0.8" />
<line x1="638" y1="604" x2="641.5" y2="604" stroke="#999" stroke-width="0.8" />
<line x1="632.5" y1="606" x2="636" y2="606" stroke="#999" stroke-width="0.8" />
<line x1="638" y1="606" x2="641.5" y2="606" stroke="#999" stroke-width="0.8" />
<line x1="632.5" y1="608" x2="636" y2="608" stroke="#999" stroke-width="0.8" />
<line x1="638" y1="608" x2="641.5" y2="608" stroke="#999" stroke-width="0.8" />
<rect x="653" y="596" width="28.5" height="21" fill="#c6c6c6" />
<rect x="660.5" y="601.5" width="13" height="9.5" fill="#d8d8d8" stroke="#777" stroke-width="1" />
<rect x="663" y="603.5" width="8" height="5.5" fill="#9a9a9a" />
<rect x="691.5" y="601.5" width="10" height="9.5" fill="#fff" stroke="#777" stroke-width="1" />
<line x1="693" y1="604" x2="700" y2="604" stroke="#888" stroke-width="0.8" />
<line x1="693" y1="606" x2="700" y2="606" stroke="#888" stroke-width="0.8" />
<line x1="693" y1="608" x2="700" y2="608" stroke="#888" stroke-width="0.8" />
<circle cx="701" cy="609" r="3.3" fill="#f1f1f1" stroke="#555" stroke-width="1"/>
<path d="M698.5 607.5c1.5 1.2 3 1.2 4.6 .3 M700 606v6" fill="none" stroke="#555" stroke-width="0.8" />
<line x1="716.2" y1="605.7" x2="724" y2="605.7" stroke="#555" stroke-width="1.6" />
<line x1="727.2" y1="605.7" x2="826.6" y2="605.7" stroke="#8a8a8a" stroke-width="1" />
<rect x="775.2" y="600.7" width="3.2" height="11.4" fill="#555" />
<line x1="830.3" y1="605.7" x2="839.4" y2="605.7" stroke="#555" stroke-width="1.6" />
<line x1="834.9" y1="601.2" x2="834.9" y2="610.3" stroke="#555" stroke-width="1.6" />
<text class="u" x="851.0" y="611.0" font-size="12.5" fill="#555" textLength="32.9" lengthAdjust="spacingAndGlyphs">100%</text>
</svg>
</div>
</body></html>
